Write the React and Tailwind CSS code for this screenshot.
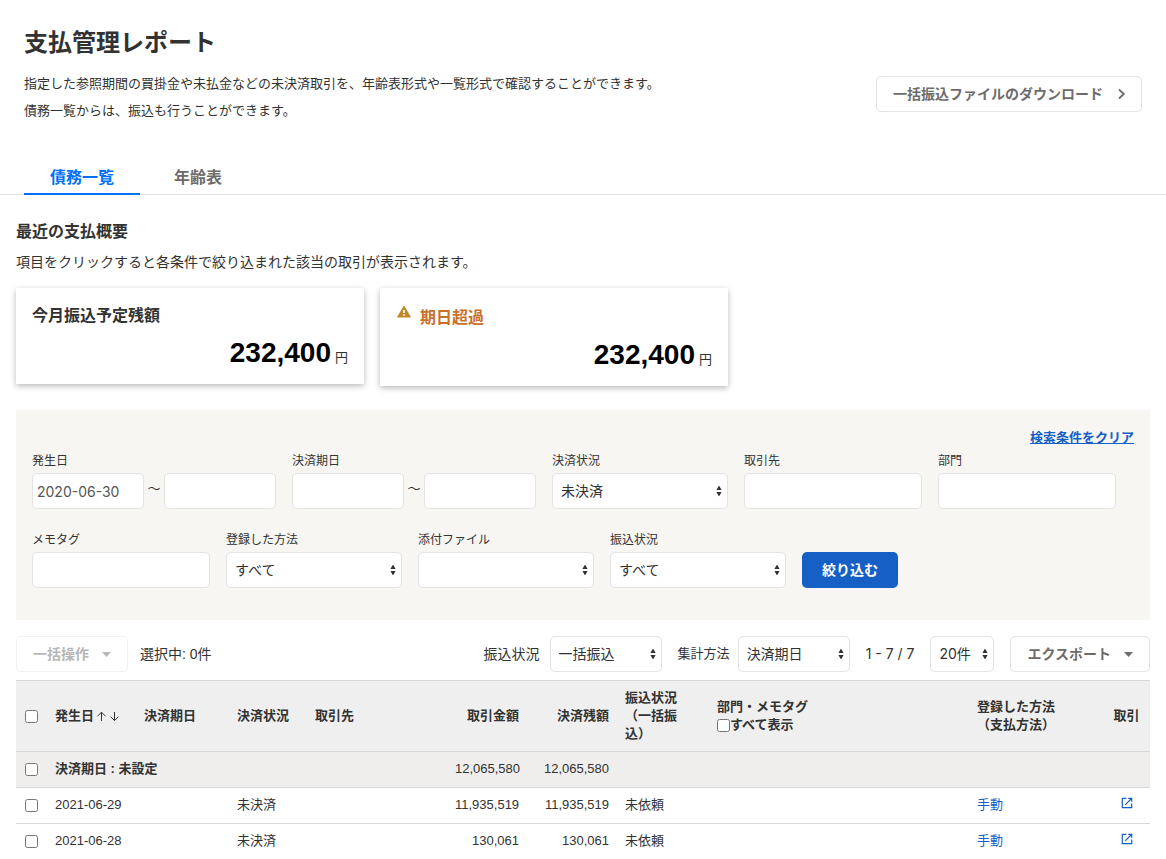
import { useState } from 'react'
import clsx from 'clsx'

const tabs = ['債務一覧', '年齢表']

const rows = [
  { date: '2021-06-29', status: '未決済', amount: '11,935,519', balance: '11,935,519', transfer: '未依頼', method: '手動' },
  { date: '2021-06-28', status: '未決済', amount: '130,061', balance: '130,061', transfer: '未依頼', method: '手動' },
]

/* Icons */
function ChevronRight() {
  return (
    <svg width="9" height="12" viewBox="0 0 9 12" fill="none" stroke="currentColor" strokeWidth="1.8" aria-hidden="true">
      <path d="M2 1.5 6.8 6 2 10.5" />
    </svg>
  )
}

function Caret() {
  return (
    <svg width="9" height="5" viewBox="0 0 9 5" fill="currentColor" aria-hidden="true">
      <path d="M0 0h9L4.5 5z" />
    </svg>
  )
}

function UpDown({ className }) {
  return (
    <svg width="6" height="11" viewBox="0 0 6 11" fill="currentColor" className={className} aria-hidden="true">
      <path d="M3 0 5.6 4.4H.4zM3 11 .4 6.6h5.2z" />
    </svg>
  )
}

function SortArrow({ down }) {
  return (
    <svg width="11" height="11" viewBox="0 0 11 11" fill="none" stroke="currentColor" strokeWidth="1" aria-hidden="true">
      <path d={down ? 'M5.5 1v8.5M1.5 5.6l4 4 4-4' : 'M5.5 10V1.2M1.5 5.2l4-4 4 4'} />
    </svg>
  )
}

function Warning() {
  return (
    <svg width="16" height="14" viewBox="0 0 16 14" aria-hidden="true" className="text-[#bf8a2a]">
      <path d="M8 1.2 15.2 13.4H.8z" fill="currentColor" />
      <path d="M7.2 6h1.7v3H7.2zM7.2 10.2h1.7v1.6H7.2z" fill="#fff" />
    </svg>
  )
}

function OpenIcon() {
  return (
    <svg width="12" height="12" viewBox="0 0 12 12" fill="none" stroke="currentColor" strokeWidth="1.2" aria-hidden="true">
      <path d="M5.4 1.3H1.3v9.4h9.4V6.6" />
      <path d="M7.2 1.3h3.5v3.5M10.5 1.5 4.2 7.8" />
    </svg>
  )
}

/* Form parts */
function Select({ id, label, options, className }) {
  return (
    <div className={clsx('relative', className)}>
      <select
        id={id}
        aria-label={label}
        className="block w-full h-9 appearance-none rounded-[5px] border border-[#e4e3e4] bg-white pl-2 pr-5 font-[Inter,'Noto_Sans_CJK_JP',sans-serif] text-sm text-[#323232]"
      >
        {options.map((o) => <option key={o}>{o}</option>)}
      </select>
      <UpDown className="absolute right-1.5 top-1/2 -translate-y-1/2 pointer-events-none" />
    </div>
  )
}

function TextInput({ className, ...props }) {
  return (
    <input
      type="text"
      className={clsx(
        "block h-9 rounded-[5px] border border-[#e4e3e4] bg-white px-1 font-[Inter,'Noto_Sans_CJK_JP',sans-serif] text-sm text-[#555]",
        className,
      )}
      {...props}
    />
  )
}

function Field({ id, label, children }) {
  return (
    <div>
      <label htmlFor={id} className="block mb-[3px] text-xs leading-[18px]">{label}</label>
      {children}
    </div>
  )
}

function DateRange({ id, label, from }) {
  return (
    <Field id={id} label={label}>
      <div className="flex items-center">
        <TextInput id={id} defaultValue={from} className="w-28" />
        <span className="w-5 pb-1 text-center text-[13px]">〜</span>
        <TextInput aria-label={`${label} 終了`} className="w-28" />
      </div>
    </Field>
  )
}

function SummaryCard({ title, amount, warn }) {
  return (
    <a href="#list" className="block w-[348px] bg-white p-4 shadow-[0_2px_6px_rgba(0,0,0,0.28)]">
      {warn ? (
        <div className="flex items-start gap-2 text-[#c9702b]">
          <Warning />
          <h3 className="mt-0.5 text-base leading-6 font-bold">{title}</h3>
        </div>
      ) : (
        <h3 className="text-base leading-6 font-bold">{title}</h3>
      )}
      <p className="flex items-baseline justify-end gap-1 mt-2.5">
        <strong className="text-[28px] leading-[30px] font-bold text-black">{amount}</strong>
        <span className="text-[13px] leading-4">円</span>
      </p>
    </a>
  )
}

function Toolbar() {
  return (
    <div className="flex items-center justify-between mt-4">
      <div className="flex items-center gap-3">
        <button
          disabled
          className="flex items-center h-9 gap-[13px] rounded-[5px] border border-[#f2f2f2] px-4 text-sm font-bold text-[#b7b6b6]"
        >
          一括操作
          <Caret />
        </button>
        <span className="text-sm">選択中: 0件</span>
      </div>
      <div className="flex items-center gap-4">
        <div className="flex items-center gap-2.5">
          <label htmlFor="bulk-status" className="text-sm">振込状況</label>
          <Select id="bulk-status" options={['一括振込']} className="w-28" />
        </div>
        <div className="flex items-center gap-2">
          <label htmlFor="group-by" className="text-[13px]">集計方法</label>
          <Select id="group-by" options={['決済期日']} className="w-28" />
        </div>
        <span className="font-[Inter,sans-serif] text-sm">1 - 7 / 7</span>
        <Select id="per-page" label="表示件数" options={['20件']} className="w-16" />
        <button className="flex items-center h-9 gap-[13px] rounded-[5px] border border-[#e4e3e4] px-4 text-sm font-bold text-[#6e6b6b]">
          エクスポート
          <Caret />
        </button>
      </div>
    </div>
  )
}

function DebtTable() {
  return (
    <table id="list" className="w-full mt-2 table-fixed border-separate border-spacing-0 border-t border-[#d7d7d7] text-left text-[13px] leading-[18px]">
      <colgroup>
        <col className="w-[31px]" />
        <col className="w-[89px]" />
        <col className="w-[93px]" />
        <col className="w-[78px]" />
        <col />
        <col className="w-20" />
        <col className="w-[90px]" />
        <col className="w-[92px]" />
        <col className="w-[260px]" />
        <col className="w-[134px]" />
        <col className="w-[47px]" />
      </colgroup>
      <thead className="bg-[#efefef] [&_th]:border-b [&_th]:border-[#d7d7d7] [&_th]:px-2 [&_th]:py-2">
        <tr>
          <th><input type="checkbox" aria-label="すべて選択" className="block mx-auto" /></th>
          <th>
            <button className="flex items-center gap-0.5 font-bold">
              <span className="whitespace-nowrap">発生日</span>
              <SortArrow />
              <SortArrow down />
            </button>
          </th>
          <th>決済期日</th>
          <th>決済状況</th>
          <th>取引先</th>
          <th className="text-right">取引金額</th>
          <th className="text-right">決済残額</th>
          <th><div className="pr-2">振込状況（一括振込）</div></th>
          <th>
            <div>部門・メモタグ</div>
            <label className="flex items-center">
              <input type="checkbox" />
              すべて表示
            </label>
          </th>
          <th>登録した方法<br />（支払方法）</th>
          <th className="text-center whitespace-nowrap">取引</th>
        </tr>
      </thead>
      <tbody className="[&_td]:h-9 [&_td]:px-2 [&_td:not(:first-child)]:pb-0.5 [&_td]:border-b [&_td]:border-[#d7d7d7] [&_tr:last-child_td]:h-[35px] [&_tr:last-child_td]:border-b-0">
        <tr className="bg-[#efeeec]">
          <td><input type="checkbox" aria-label="決済期日 未設定を選択" className="block mx-auto" /></td>
          <td colSpan={4} className="font-bold">決済期日 : 未設定</td>
          <td className="text-right">12,065,580</td>
          <td className="text-right">12,065,580</td>
          <td colSpan={4} />
        </tr>
        {rows.map((r) => (
          <tr key={r.date}>
            <td><input type="checkbox" aria-label={`${r.date}を選択`} className="block mx-auto" /></td>
            <td className="whitespace-nowrap">{r.date}</td>
            <td />
            <td>{r.status}</td>
            <td />
            <td className="text-right">{r.amount}</td>
            <td className="text-right">{r.balance}</td>
            <td>{r.transfer}</td>
            <td />
            <td><a href="#manual" className="text-[#155fc5]">{r.method}</a></td>
            <td>
              <a href="#deal" aria-label="取引を開く" className="flex justify-center pb-1 text-[#155fc5]">
                <OpenIcon />
              </a>
            </td>
          </tr>
        ))}
      </tbody>
    </table>
  )
}

export default function App() {
  const [active, setActive] = useState(tabs[0])

  return (
    <div className="bg-white font-['Liberation_Sans','Noto_Sans_CJK_JP',sans-serif] text-[#323232]">
      <header className="flex items-start justify-between px-6 pt-[25px]">
        <div>
          <h1 className="text-2xl leading-9 font-bold">支払管理レポート</h1>
          <p className="mt-[9px] text-[13px] leading-[27px]">
            指定した参照期間の買掛金や未払金などの未決済取引を、年齢表形式や一覧形式で確認することができます。<br />
            債務一覧からは、振込も行うことができます。
          </p>
        </div>
        <button className="mt-[51px] flex items-center h-9 gap-3.5 rounded-[5px] border border-[#e4e3e4] pl-4 pr-[15px] text-sm font-bold text-[#6e6b6b]">
          一括振込ファイルのダウンロード
          <ChevronRight />
        </button>
      </header>

      <nav className="flex gap-2 mt-9 px-6 border-b border-[#e4e3e4]">
        {tabs.map((t) => (
          <button
            key={t}
            onClick={() => setActive(t)}
            className={clsx(
              '-mb-px h-[35px] px-[26px] pt-[3px] border-b-2 text-base leading-6 font-bold',
              active === t ? 'border-[#0070f5] text-[#0070f5]' : 'border-transparent text-[#6e6b6b]',
            )}
          >
            {t}
          </button>
        ))}
      </nav>

      <main className="px-4 pt-[25px]">
        <h2 className="text-base leading-6 font-bold">最近の支払概要</h2>
        <p className="mt-1.5 text-sm leading-6">項目をクリックすると各条件で絞り込まれた該当の取引が表示されます。</p>

        <div className="flex items-start gap-4 mt-3.5">
          <SummaryCard title="今月振込予定残額" amount="232,400" />
          <SummaryCard title="期日超過" amount="232,400" warn />
        </div>

        <form className="mt-6 bg-[#f7f6f3] px-4 pt-[19px] pb-8" onSubmit={(e) => e.preventDefault()}>
          <div className="flex justify-end mb-[5px]">
            <a href="#clear" className="text-[13px] leading-[18px] font-bold text-[#155fc5] underline">検索条件をクリア</a>
          </div>
          <div className="flex flex-wrap items-end gap-x-4 gap-y-[22px]">
            <DateRange id="issued" label="発生日" from="2020-06-30" />
            <DateRange id="due" label="決済期日" />
            <Field id="settle" label="決済状況">
              <Select id="settle" options={['未決済']} className="w-44" />
            </Field>
            <Field id="partner" label="取引先"><TextInput id="partner" className="w-[178px]" /></Field>
            <Field id="section" label="部門"><TextInput id="section" className="w-[178px]" /></Field>
            <Field id="memo" label="メモタグ"><TextInput id="memo" className="w-[178px]" /></Field>
            <Field id="method" label="登録した方法">
              <Select id="method" options={['すべて']} className="w-44" />
            </Field>
            <Field id="file" label="添付ファイル">
              <Select id="file" options={['']} className="w-44" />
            </Field>
            <Field id="transfer" label="振込状況">
              <Select id="transfer" options={['すべて']} className="w-44" />
            </Field>
            <button type="submit" className="h-9 w-24 rounded-[5px] bg-[#155fc5] text-sm font-bold text-white">絞り込む</button>
          </div>
        </form>

        <Toolbar />
        <DebtTable />
      </main>
    </div>
  )
}
